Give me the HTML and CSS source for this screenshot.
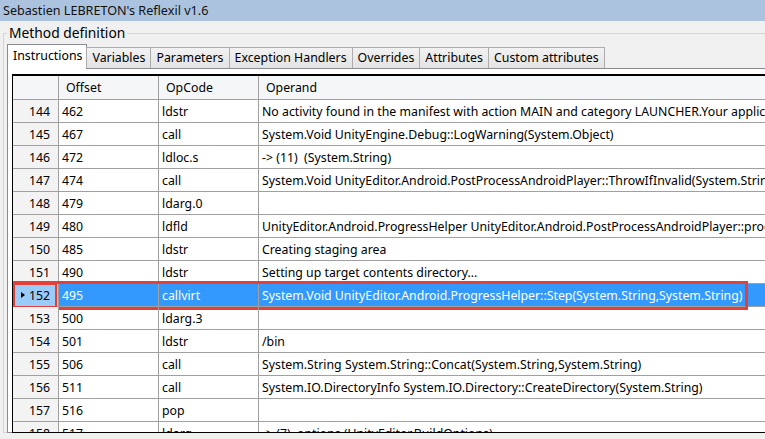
FILE: index.html
```html
<!DOCTYPE html>
<html>
<head>
<meta charset="utf-8">
<link rel="stylesheet" href="styles.css">
</head>
<body>
<div class="title">Sebastien LEBRETON's Reflexil v1.6</div>
<div class="group">
  <div class="legend">Method definition</div>
  <div class="tabs">
    <div class="tab active">Instructions</div>
    <div class="tab">Variables</div>
    <div class="tab">Parameters</div>
    <div class="tab">Exception Handlers</div>
    <div class="tab">Overrides</div>
    <div class="tab">Attributes</div>
    <div class="tab">Custom attributes</div>
  </div>
  <div class="panel">
    <div class="grid">
      <div class="row head">
        <div class="rh"></div>
        <div class="c c1">Offset</div>
        <div class="c c2">OpCode</div>
        <div class="c c3">Operand</div>
      </div>
      <div class="row"><div class="rh">144</div><div class="c c1">462</div><div class="c c2">ldstr</div><div class="c c3">No activity found in the manifest with action MAIN and category LAUNCHER.Your application will not start</div></div>
      <div class="row"><div class="rh">145</div><div class="c c1">467</div><div class="c c2">call</div><div class="c c3">System.Void UnityEngine.Debug::LogWarning(System.Object)</div></div>
      <div class="row"><div class="rh">146</div><div class="c c1">472</div><div class="c c2">ldloc.s</div><div class="c c3">-&gt; (11)&nbsp; (System.String)</div></div>
      <div class="row"><div class="rh">147</div><div class="c c1">474</div><div class="c c2">call</div><div class="c c3">System.Void UnityEditor.Android.PostProcessAndroidPlayer::ThrowIfInvalid(System.String)</div></div>
      <div class="row"><div class="rh">148</div><div class="c c1">479</div><div class="c c2">ldarg.0</div><div class="c c3"></div></div>
      <div class="row"><div class="rh">149</div><div class="c c1">480</div><div class="c c2">ldfld</div><div class="c c3">UnityEditor.Android.ProgressHelper UnityEditor.Android.PostProcessAndroidPlayer::progress</div></div>
      <div class="row"><div class="rh">150</div><div class="c c1">485</div><div class="c c2">ldstr</div><div class="c c3">Creating staging area</div></div>
      <div class="row"><div class="rh">151</div><div class="c c1">490</div><div class="c c2">ldstr</div><div class="c c3">Setting up target contents directory...</div></div>
      <div class="row sel"><div class="rh"><span class="arrow"></span>152</div><div class="c c1">495</div><div class="c c2">callvirt</div><div class="c c3">System.Void UnityEditor.Android.ProgressHelper::Step(System.String,System.String)</div><div class="mark-row"></div><div class="mark-head"></div></div>
      <div class="row"><div class="rh">153</div><div class="c c1">500</div><div class="c c2">ldarg.3</div><div class="c c3"></div></div>
      <div class="row"><div class="rh">154</div><div class="c c1">501</div><div class="c c2">ldstr</div><div class="c c3">/bin</div></div>
      <div class="row"><div class="rh">155</div><div class="c c1">506</div><div class="c c2">call</div><div class="c c3">System.String System.String::Concat(System.String,System.String)</div></div>
      <div class="row"><div class="rh">156</div><div class="c c1">511</div><div class="c c2">call</div><div class="c c3">System.IO.DirectoryInfo System.IO.Directory::CreateDirectory(System.String)</div></div>
      <div class="row"><div class="rh">157</div><div class="c c1">516</div><div class="c c2">pop</div><div class="c c3"></div></div>
      <div class="row"><div class="rh">158</div><div class="c c1">517</div><div class="c c2">ldarg</div><div class="c c3">-&gt; (7)&nbsp; options (UnityEditor.BuildOptions)</div></div>
    </div>
  </div>
</div>
</body>
</html>
```
FILE: styles.css
```css
html, body {
  margin: 0;
  padding: 0;
}
body {
  width: 765px;
  height: 439px;
  overflow: hidden;
  background: #f0f0f0;
  font-family: "Noto Sans", "Open Sans", sans-serif;
  font-size: 12.3px;
  color: #000;
}
.title {
  height: 21px;
  line-height: 21px;
  padding-left: 3px;
  font-size: 12.6px;
  background: #abc3df;
  color: #111;
}
.group {
  margin: 12px 0 0 3px;
  border: 1px solid #d5d5d5;
  border-right: none;
  padding: 0 0 2px 3px;
  height: 400px;
  box-sizing: border-box;
}
.legend {
  margin: -9px 0 0 0;
  padding: 0 2px;
  width: fit-content;
  background: #f0f0f0;
  font-size: 13.8px;
  line-height: 16px;
}
.tabs {
  margin-top: 3px;
  display: flex;
  align-items: flex-end;
  height: 24px;
  position: relative;
  z-index: 1;
}
.tab {
  line-height: 19px;
  padding: 0 5px;
  border: 1px solid #acacac;
  border-bottom: none;
  margin-left: -1px;
  background: linear-gradient(#f2f2f2, #e3e3e3);
  font-size: 12.35px;
  box-sizing: border-box;
  height: 21px;
}
.tab:first-child { margin-left: 0; }
.tab.active {
  height: 25px;
  margin-bottom: -1px;
  line-height: 21px;
  padding: 0 4px 0 5px;
  background: #fff;
  border-color: #898c95;
}
.panel {
  border: 1px solid #898c95;
  border-right: none;
  background: #fff;
  padding: 5px 0 0 4px;
  height: 365px;
  box-sizing: border-box;
}
.grid {
  border-top: 2px solid #000;
  border-left: 1px solid #000;
  border-bottom: 1px solid #000;
  width: 900px;
  height: 359px;
  overflow: hidden;
  box-sizing: border-box;
  background: #fff;
}
.row {
  display: flex;
  height: 23px;
  border-bottom: 1px solid #a0a0a0;
  box-sizing: border-box;
  line-height: 23px;
  position: relative;
}
.row.head {
  height: 24px;
  line-height: 23px;
  background: #f5f6f7;
}
.rh {
  width: 46px;
  flex: none;
  border-right: 1px solid #a0a0a0;
  background: #f3f3f3;
  text-align: right;
  padding-right: 8px;
  box-sizing: border-box;
  position: relative;
}
.row.head .rh { background: #f5f6f7; }
.c {
  flex: none;
  padding-left: 3px;
  border-right: 1px solid #a0a0a0;
  box-sizing: border-box;
  white-space: nowrap;
  overflow: hidden;
}
.row.head .c { padding-left: 7px; }
.c1, .c2 { width: 100px; }
.c3 { flex: 1; border-right: none; }
.row.sel .c { background: #3399ff; color: #fff; }
.row.sel .rh { background: #99ccf8; }
.arrow {
  position: absolute;
  left: 8px;
  top: 8px;
  border-left: 4px solid #000;
  border-top: 3.5px solid transparent;
  border-bottom: 3.5px solid transparent;
}
.mark-row {
  position: absolute;
  left: -3px;
  top: -3px;
  width: 738px;
  height: 29px;
  border: 3px solid #e3403c;
  box-sizing: border-box;
}
.mark-head {
  position: absolute;
  left: 0;
  top: -1px;
  width: 44px;
  height: 25px;
  border: 2px solid #e3403c;
  box-sizing: border-box;
}
```
